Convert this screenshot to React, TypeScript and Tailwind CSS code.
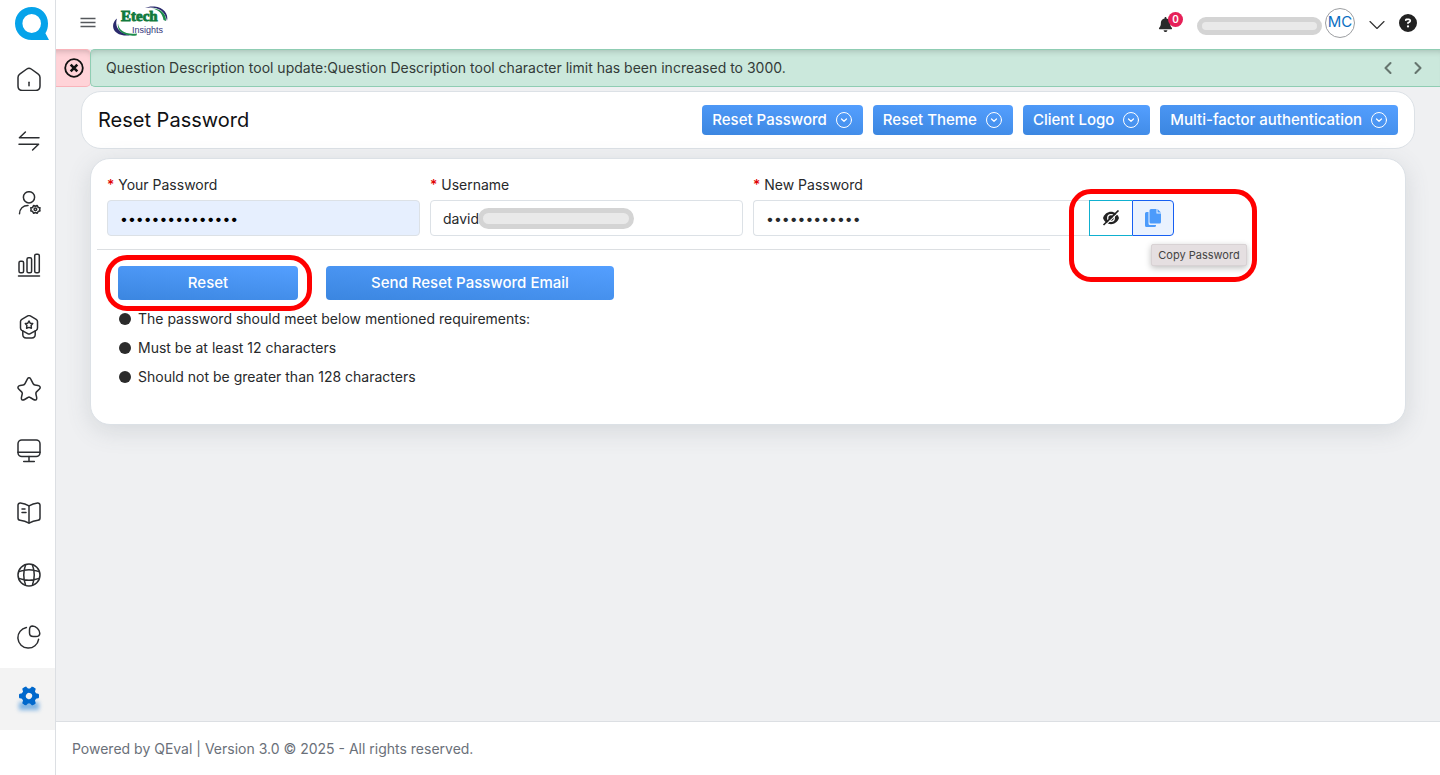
import React, { useState } from 'react';
import { ChevronDown, ChevronLeft, ChevronRight } from 'lucide-react';
import { FaBell, FaCircleQuestion, FaGear } from 'react-icons/fa6';

interface NavItem {
  id: string;
  label: string;
  icon: React.ReactNode;
}

// Sidebar icons, all drawn on a 24px grid
const navItems: NavItem[] = [
  {
    id: 'home',
    label: 'Home',
    icon: (
      <>
        <path d="M1 10.500c0-1.500.5-2.500 1.700-3.300L9.800 2c1.400-1 3-1 4.400 0l7.100 5.200c1.200.8 1.700 1.800 1.700 3.300v8.500c0 3-1.500 4.500-4.500 4.500h-13C2.500 23.500 1 22 1 19z" />
        <path d="M12 15.200v3.600" />
      </>
    ),
  },
  {
    id: 'transfer',
    label: 'Transfer',
    icon: <path d="M22 8.700H2.400l6-5.700M2 15.300h19.600l-6 5.700" />,
  },
  {
    id: 'users',
    label: 'User settings',
    icon: (
      <>
        <circle cx="12" cy="6.300" r="5.600" />
        <path d="M2.500 22.800c.200-5 3.500-8.300 8.500-8.300" />
        <circle cx="18.400" cy="18.300" r="1.300" />
        <path d="M16.700 14.500l1.700.800 1.700-.800 1.200 2 1.700.300-.3 1.600.3 1.600-1.700.300-1.200 2-1.700-.8-1.700.8-1.200-2-1.700-.3.300-1.600-.3-1.600 1.700-.3z" />
      </>
    ),
  },
  {
    id: 'reports',
    label: 'Reports',
    icon: (
      <>
        <path d="M1.500 22.900h21" />
        <rect x="2" y="8.200" width="4.600" height="11.600" rx="1.500" />
        <rect x="10" y="4.700" width="4.600" height="15.100" rx="1.500" />
        <rect x="17.700" y="1.200" width="4.600" height="18.600" rx="1.500" />
      </>
    ),
  },
  {
    id: 'badges',
    label: 'Badges',
    icon: (
      <>
        <path d="M10.700.9c.8-.5 1.800-.5 2.600 0l5.900 3.400c.8.5 1.300 1.300 1.300 2.300v6.400c0 1-.5 1.800-1.300 2.300l-5.900 3.400c-.8.500-1.800.5-2.600 0l-5.900-3.400c-.8-.5-1.300-1.300-1.300-2.300V6.600c0-1 .5-1.800 1.300-2.300z" />
        <path d="M5.800 16v3.500c0 2.500 1 3.400 3.400 3.400h5.600c2.400 0 3.400-.9 3.400-3.400V16" />
        <path d="M12 6l1.200 2.200 2.500.4-1.600 1.900.3 2.700-2.400-.8-2.400.8.3-2.700-1.600-1.900 2.500-.4z" />
      </>
    ),
  },
  {
    id: 'favorites',
    label: 'Favorites',
    icon: (
      <path d="M13.900 2.300l2.200 4.400c.3.600 1.100 1.200 1.800 1.300l3.100.5c2.300.4 2.900 2.100 1.200 3.700l-2.700 2.700c-.5.500-.7 1.400-.6 2.100l.7 3.200c.6 2.600-.9 3.600-3.100 2.300l-3.300-2c-.6-.4-1.700-.4-2.300 0l-3.300 2c-2.200 1.300-3.700.3-3.100-2.300l.7-3.200c.2-.7-.1-1.600-.6-2.100l-2.700-2.700C.300 10.600.800 8.900 3.100 8.500l3.100-.5c.7-.1 1.500-.7 1.800-1.300l2.200-4.400c1-2.100 2.700-2.100 3.700 0z" />
    ),
  },
  {
    id: 'monitor',
    label: 'Monitoring',
    icon: (
      <>
        <rect x="1" y="1" width="22" height="16.500" rx="3.800" />
        <path d="M1 13.200h22M12 17.500v5M6.700 22.600h10.600" />
      </>
    ),
  },
  {
    id: 'library',
    label: 'Library',
    icon: (
      <>
        <path d="M23 17V4.300c0-1.400-1-2.400-2.400-2.300-3 .3-6 1.300-8.600 2.800C9.400 3.300 6.400 2.300 3.400 2 2 1.900 1 2.900 1 4.300V17c0 1.200.9 2.200 2.100 2.300 3 .3 6.200 1.300 8.900 2.900 2.700-1.600 5.900-2.600 8.900-2.900 1.200-.1 2.100-1.100 2.100-2.300z" />
        <path d="M12 4.800v17M5 8h3M5 11.500h4" />
      </>
    ),
  },
  {
    id: 'language',
    label: 'Language',
    icon: (
      <>
        <circle cx="12" cy="12" r="11" />
        <path d="M8.600 1.800a30 30 0 0 0 0 20.400M15.400 1.800a30 30 0 0 1 0 20.400M1.800 15.400a30 30 0 0 0 20.400 0M1.800 8.600a30 30 0 0 1 20.400 0" />
      </>
    ),
  },
  {
    id: 'analytics',
    label: 'Analytics',
    icon: (
      <>
        <path d="M12.500 5c0-3 .8-4 3-4 3.500.2 7 3.500 7.300 7.200 0 2.300-1 3.300-4 3.300h-2.500c-2.600 0-3.800-1-3.800-3.500z" />
        <path d="M9.400 2.500A10.400 10.400 0 1 0 21.600 14.300" />
      </>
    ),
  },
];

const menuButtons = ['Reset Password', 'Reset Theme', 'Client Logo', 'Multi-factor authentication'];

const requirements = [
  'The password should meet below mentioned requirements:',
  'Must be at least 12 characters',
  'Should not be greater than 128 characters',
];

const blueButton = 'rounded bg-linear-[5deg] from-[#3b86e0] to-[#549fff] text-[15px] leading-5 font-medium text-white cursor-pointer';
const fieldClass = 'h-9 w-full min-w-0 border border-[#dce1e6] px-3 text-sm outline-none';

const Sidebar: React.FC = () => (
  <nav className="flex w-14 shrink-0 flex-col border-r border-[#dcdfe3] bg-white">
    <a href="#" aria-label="QEval" className="flex h-12 items-center justify-center pl-2">
      <svg width="34" height="34" viewBox="0 0 34 34">
        <path
          fill="#06a3ea"
          fillRule="evenodd"
          d="M16.700 0C26.200 0 33 7.200 33 16.400c0 4.200-.9 7.300-2.600 9.900L34 33H16.700C7.200 33 0 25.700 0 16.500S7.200 0 16.700 0zM16.700 7a9.300 9.500 0 1 0 0 19 9.300 9.500 0 0 0 0-19z"
        />
      </svg>
    </a>
    {navItems.map((item) => (
      <a key={item.id} href="#" aria-label={item.label} className="flex h-[62px] items-center justify-center pl-0.5">
        <svg width="24" height="24" viewBox="0 0 24 24" fill="none" stroke="#2b2d30" strokeWidth="1.500" strokeLinecap="round" strokeLinejoin="round">
          {item.icon}
        </svg>
      </a>
    ))}
    <a href="#" aria-label="Settings" className="flex h-[62px] items-center justify-center bg-[#f3f3f3] pb-1.5 pl-[3px]">
      <span className="relative">
        <span className="absolute top-4 left-0 h-2 w-5 bg-[#0a74d4]/50 blur-[2px]" />
        <FaGear size={20} className="relative rotate-30 text-[#0068cc]" />
      </span>
    </a>
  </nav>
);

const EtechLogo: React.FC = () => (
  <svg width="58" height="30" viewBox="0 0 58 30" role="img" aria-label="Etech Insights" className="mt-1.5 self-start">
    <path d="M33 2C43 0 53 3 55 15c2-7-4-14-12.500-14.500C39 .200 35.500.700 33 2z" fill="#2a2a6c" />
    <path d="M40 2.500c6 1 10.500 4.500 11.500 11.500l2.500 1C54.500 8 49 2.500 40 2.500z" fill="#1c8a4a" />
    <path d="M5 12.500C-1 17-.5 26 9 28.700c4 1.100 7 1 9 .3C8 27.500 2 21.500 5 12.500z" fill="#2a2a6c" />
    <path d="M6 17.500C6.500 24 13 29 25 27.500l-.5 1.900C12 31 4.500 25 6 17.500z" fill="#1c8a4a" />
    <text x="9" y="15" fontFamily="'Liberation Serif', serif" fontSize="15" fontWeight="700" fill="#117a3d" stroke="#117a3d" strokeWidth="0.900">
      Etech
    </text>
    <text x="20" y="27" fontFamily="'Liberation Sans', sans-serif" fontSize="9" fill="#35357a">
      Insights
    </text>
  </svg>
);

// Grey pill that covers private values
const Redacted: React.FC<{ className: string }> = ({ className }) => (
  <span className={`block rounded-full border-[5px] border-[#d4d4d4] bg-[#e9e9e9] ${className}`} />
);

const Header: React.FC = () => (
  <header className="flex h-[49px] items-center justify-between bg-white pr-[23px] pb-1 pl-6">
    <div className="flex h-full items-center gap-4">
      <button type="button" aria-label="Toggle menu" className="cursor-pointer">
        <svg width="16" height="12" viewBox="0 0 16 12" stroke="#55585c" strokeWidth="1.300">
          <path d="M.500 1.500h15M.500 5.500h15M.500 9.500h15" />
        </svg>
      </button>
      <EtechLogo />
    </div>
    <div className="flex items-center">
      <button type="button" aria-label="Notifications" className="relative mr-6 cursor-pointer">
        <FaBell size={15} className="mt-1 text-[#2a2a2a]" />
        <span className="absolute -top-px left-2.5 flex size-[15px] items-center justify-center rounded-full bg-[#e62058] text-[10px] font-semibold text-white">0</span>
      </button>
      <Redacted className="mt-1.5 mr-[3px] h-[18px] w-[125px]" />
      <span className="flex size-[30px] items-center justify-center rounded-full border border-[#9c9ea1] text-[15px] text-[#0a6ec2]">MC</span>
      <button type="button" aria-label="Account menu" className="mt-1 ml-2 cursor-pointer">
        <ChevronDown size={28} strokeWidth={1} className="text-[#333]" />
      </button>
      <button type="button" aria-label="Help" className="ml-2 cursor-pointer">
        <FaCircleQuestion size={18} className="text-[#222]" />
      </button>
    </div>
  </header>
);

const Banner: React.FC = () => (
  <div className="flex h-[38px]">
    <button type="button" aria-label="Close message" className="flex w-[35px] cursor-pointer items-center justify-center rounded-r-[5px] border border-l-0 border-[#f9b3ba] bg-[#ffd3d8] pl-0.5 shadow-[inset_0_6px_6px_-5px_rgba(0,0,0,0.2)]">
      <svg width="20" height="20" viewBox="0 0 20 20" fill="none" stroke="#111">
        <circle cx="10" cy="10" r="8.800" strokeWidth="1.800" />
        <path d="M6.700 6.700l6.600 6.600M13.300 6.700l-6.600 6.600" strokeWidth="2.600" />
      </svg>
    </button>
    <div className="-ml-px flex flex-1 items-center justify-between rounded-l-[5px] border border-r-0 border-[#8fcdb3] bg-[#cbe8dc] pr-3 pl-[15px] shadow-[inset_0_6px_6px_-5px_rgba(0,0,0,0.2)]">
      <p className="text-sm text-[#333b38]">Question Description tool update:Question Description tool character limit has been increased to 3000.</p>
      <div className="flex gap-2.5 text-[#65756e]">
        <button type="button" aria-label="Previous message" className="cursor-pointer">
          <ChevronLeft size={20} strokeWidth={2.5} />
        </button>
        <button type="button" aria-label="Next message" className="cursor-pointer">
          <ChevronRight size={20} strokeWidth={2.5} />
        </button>
      </div>
    </div>
  </div>
);

interface FieldLabelProps {
  htmlFor: string;
  text: string;
}

const FieldLabel: React.FC<FieldLabelProps> = ({ htmlFor, text }) => (
  <label htmlFor={htmlFor} className="mb-[5px] block text-sm">
    <span className="font-medium text-[#e00000]">*</span> {text}
  </label>
);

const ResetPasswordForm: React.FC = () => {
  const [yourPassword, setYourPassword] = useState('abcdefghijklmno');
  const [username, setUsername] = useState('david');
  const [newPassword, setNewPassword] = useState('abcdefghijkl');
  const [visible, setVisible] = useState(false);

  return (
    <form
      onSubmit={(e) => e.preventDefault()}
      className="mx-[34px] mt-[9px] rounded-[20px] border border-[#dce1e6] bg-white px-[11px] pt-4 pb-[33px] shadow-[0_6px_24px_rgba(80,95,105,0.16)]"
    >
      <div className="flex">
        <div className="w-1/4 px-[5px]">
          <FieldLabel htmlFor="your-password" text="Your Password" />
          <input
            id="your-password"
            type="password"
            value={yourPassword}
            onChange={(e) => setYourPassword(e.target.value)}
            className={`${fieldClass} rounded bg-[#e6effe] text-black`}
          />
        </div>
        <div className="w-1/4 px-[5px]">
          <FieldLabel htmlFor="username" text="Username" />
          <div className="relative">
            <input
              id="username"
              type="text"
              value={username}
              onChange={(e) => setUsername(e.target.value)}
              className={`${fieldClass} rounded bg-white`}
            />
            <Redacted className="absolute top-2 left-12 h-[21px] w-[156px]" />
          </div>
        </div>
        <div className="w-1/3 px-[5px]">
          <FieldLabel htmlFor="new-password" text="New Password" />
          <div className="relative flex">
            <input
              id="new-password"
              type={visible ? 'text' : 'password'}
              value={newPassword}
              onChange={(e) => setNewPassword(e.target.value)}
              className={`${fieldClass} flex-1 rounded-l border-r-0 bg-white`}
            />
            <button
              type="button"
              aria-label="Show password"
              onClick={() => setVisible((prev) => !prev)}
              className="flex w-[43px] shrink-0 cursor-pointer items-center justify-center border border-r-0 border-[#0fb0d0]"
            >
              <svg width="18" height="16" viewBox="0 0 18 16" fill="none">
                <path d="M1 8C2.500 4 5.500 1.800 9 1.800S15.500 4 17 8C15.500 12 12.500 14.200 9 14.200S2.500 12 1 8z" fill="#222" />
                <circle cx="9" cy="8" r="3.300" stroke="#fff" strokeWidth="1.300" />
                <path d="M2.500 16L17.500 1.700" stroke="#fff" strokeWidth="1.100" />
                <path d="M1.500 15L16.500.500" stroke="#222" strokeWidth="1.700" />
              </svg>
            </button>
            <button
              type="button"
              aria-label="Copy password"
              className="flex w-[42px] shrink-0 cursor-pointer items-center justify-center rounded-r border border-[#165ff2] bg-[#eaf2fe]"
            >
              <svg width="16" height="18" viewBox="0 0 16 18" fill="#4c9bfb">
                <path d="M6 0h5.500v4.500H16V13a1.500 1.500 0 0 1-1.500 1.500H6A1.500 1.500 0 0 1 4.500 13V1.500A1.500 1.500 0 0 1 6 0z" />
                <path d="M12.500 0L16 3.500h-3.500zM1.500 3H3.500v11.500A1.500 1.500 0 0 0 5 16h6v.500a1.500 1.500 0 0 1-1.500 1.500h-8A1.500 1.500 0 0 1 0 16.500v-12A1.500 1.500 0 0 1 1.500 3z" />
              </svg>
            </button>
            <span
              role="tooltip"
              className="absolute top-11 -right-[73px] rounded-[2px] border border-[#d8d2d4] bg-[#e5dfe1] px-1.5 py-0.5 text-[11px] leading-4 whitespace-nowrap text-[#444] shadow-[0_2px_6px_rgba(0,0,0,0.25)]"
            >
              Copy Password
            </span>
            <span className="pointer-events-none absolute -top-[11px] -right-[83px] h-[93px] w-[188px] rounded-[22px] border-[5px] border-[#ff0000]" />
          </div>
        </div>
      </div>

      <div className="-ml-[5px] w-3/4 pr-4">
        <hr className="mt-[13px] border-[#dcdfe2]" />
      </div>

      <div className="mt-4 flex gap-7 pl-4">
        <div className="relative">
          <button type="submit" className={`${blueButton} h-[34px] w-[180px]`}>
            Reset
          </button>
          <span className="pointer-events-none absolute -top-[11px] -left-[13px] h-14 w-[207px] rounded-[22px] border-[5px] border-[#ff0000]" />
        </div>
        <button type="button" className={`${blueButton} h-[34px] px-[45px]`}>
          Send Reset Password Email
        </button>
      </div>

      <ul className="mt-1 pl-[17px]">
        {requirements.map((text) => (
          <li key={text} className="flex h-[29px] items-center gap-[7px] text-sm">
            <span className="size-3 rounded-full bg-[#2b2b2b]" />
            {text}
          </li>
        ))}
      </ul>
    </form>
  );
};

const App: React.FC = () => (
  <div className="flex min-h-screen bg-[#eff0f2] font-['Inter',sans-serif] text-[#27292b]">
    <Sidebar />
    <div className="flex min-w-0 flex-1 flex-col">
      <Header />
      <Banner />
      <main className="flex-1 pb-8">
        <section className="mx-[25px] mt-1 flex h-[58px] items-center justify-between rounded-[20px] border border-[#dce1e6] bg-white px-4">
          <h1 className="text-xl text-[#101114]">Reset Password</h1>
          <div className="flex gap-2.5">
            {menuButtons.map((label) => (
              <button key={label} type="button" className={`${blueButton} flex h-[30px] items-center gap-2 px-2.5`}>
                {label}
                <svg width="18" height="18" viewBox="0 0 18 18" fill="none" stroke="#fff" strokeLinecap="round" strokeLinejoin="round">
                  <circle cx="9" cy="9" r="7.500" strokeWidth="1" />
                  <path d="M6.500 8L9 10.300 11.500 8" strokeWidth="1.200" />
                </svg>
              </button>
            ))}
          </div>
        </section>
        <ResetPasswordForm />
      </main>
      <footer className="border-t border-[#dcdfe3] bg-white px-4 py-4 text-sm leading-[21px] text-[#6a7079]">
        Powered by QEval | Version 3.0 © 2025 - All rights reserved.
      </footer>
    </div>
  </div>
);

export default App;
